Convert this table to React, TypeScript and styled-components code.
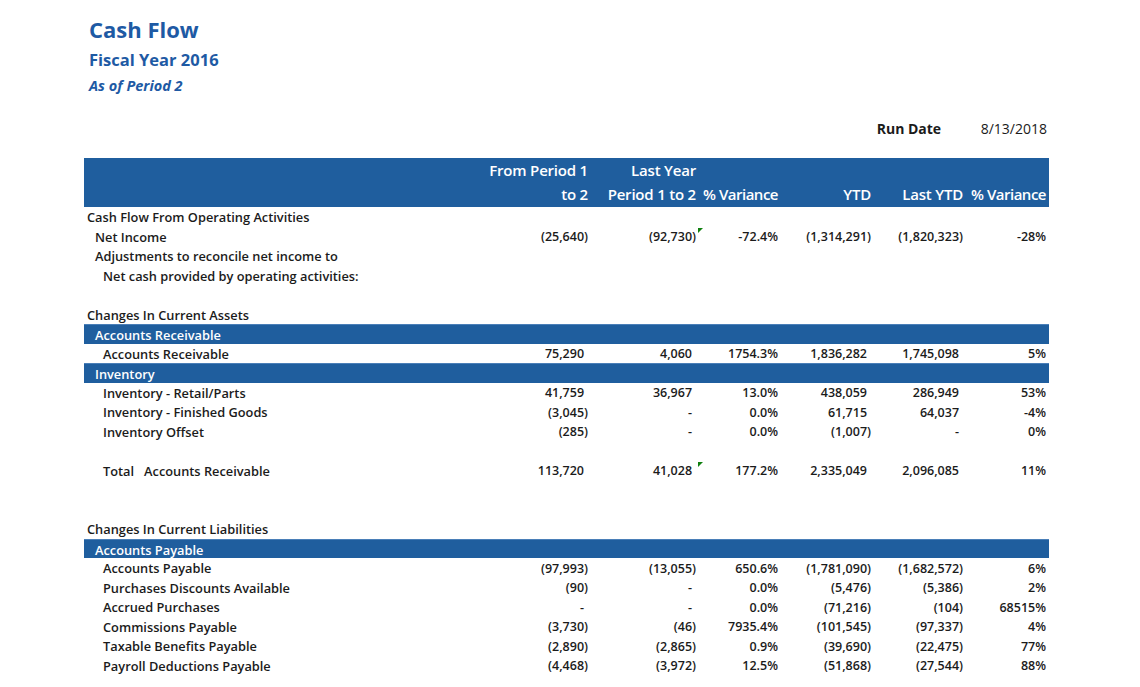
import React from "react";
import styled, { createGlobalStyle } from "styled-components";

const GlobalStyle = createGlobalStyle`
  html, body { margin: 0; padding: 0; background: #ffffff; }
  body { font-family: "Open Sans", "Noto Sans", "DejaVu Sans", sans-serif; color: #1b1b1b; }
  * { box-sizing: border-box; }
`;

const Page = styled.div`
  width: 1140px;
  padding: 12px 91px 0 84px;
`;

const TitleBlock = styled.header`
  padding-left: 5px;
  color: #1e5aa4;
`;

const Title = styled.h1`
  margin: 0;
  font-size: 22px;
  line-height: 34px;
  font-weight: 700;
`;

const Subtitle = styled.h2`
  margin: 0;
  font-size: 16.5px;
  line-height: 28px;
  font-weight: 700;
`;

const Period = styled.div`
  font-size: 14.5px;
  line-height: 24px;
  font-weight: 700;
  font-style: italic;
`;

const RunDateRow = styled.div`
  margin-top: 20px;
  display: flex;
  justify-content: flex-end;
  padding-right: 2px;
  height: 20px;
  align-items: center;
  font-size: 14px;
`;

const RunLabel = styled.span`
  font-weight: 700;
  width: 104px;
`;

const RunValue = styled.span`
  font-weight: 400;
`;

const Table = styled.div`
  margin-top: 20px;
  width: 965px;
  font-size: 12.5px;
  font-weight: 600;
`;

const cols = "1fr 100px 108px 82px 93px 92px 83px";

const HeaderBand = styled.div`
  display: grid;
  grid-template-columns: ${cols};
  background: #1f5e9e;
  color: #ffffff;
  height: 49px;
  font-size: 15px;
  font-weight: 600;
  line-height: 24px;
`;

const HeadCell = styled.div<{ $tight?: boolean }>`
  display: flex;
  flex-direction: column;
  align-items: flex-end;
  justify-content: flex-end;
  padding: 0 3px 1px 0;
  white-space: nowrap;
  letter-spacing: ${(p) => (p.$tight ? "-0.5px" : "-0.2px")};
`;

const Row = styled.div<{ $band?: boolean }>`
  display: grid;
  grid-template-columns: ${cols};
  height: 19.5px;
  align-items: center;
  padding-top: 1px;
  background: ${(p) => (p.$band ? "#1f5e9e" : "transparent")};
  color: ${(p) => (p.$band ? "#ffffff" : "#1b1b1b")};
  border-top: ${(p) => (p.$band ? "1px solid #4a7fb8" : "0")};
`;

const Label = styled.div<{ $indent: number }>`
  padding-left: ${(p) => 3 + p.$indent * 8}px;
  white-space: pre;
  font-size: 12.8px;
`;

const Cell = styled.div`
  position: relative;
  display: flex;
  justify-content: flex-end;
  padding-right: 3px;
  white-space: nowrap;
  height: 100%;
  align-items: center;
`;

const Ghost = styled.span`
  visibility: hidden;
`;

const Flag = styled.span`
  position: absolute;
  top: 0;
  right: -4px;
  width: 0;
  height: 0;
  border-top: 5px solid #108010;
  border-right: 5px solid transparent;
`;

type V = string;
type RowDef =
  | { kind: "blank" }
  | { kind: "band"; label: string }
  | { kind: "line"; label: string; indent: number; values?: V[]; flag?: boolean };

const rows: RowDef[] = [
  { kind: "line", label: "Cash Flow From Operating Activities", indent: 0 },
  { kind: "line", label: "Net Income", indent: 1, values: ["(25,640)", "(92,730)", "-72.4%", "(1,314,291)", "(1,820,323)", "-28%"], flag: true },
  { kind: "line", label: "Adjustments to reconcile net income to", indent: 1 },
  { kind: "line", label: "Net cash provided by operating activities:", indent: 2 },
  { kind: "blank" },
  { kind: "line", label: "Changes In Current Assets", indent: 0 },
  { kind: "band", label: "Accounts Receivable" },
  { kind: "line", label: "Accounts Receivable", indent: 2, values: ["75,290", "4,060", "1754.3%", "1,836,282", "1,745,098", "5%"] },
  { kind: "band", label: "Inventory" },
  { kind: "line", label: "Inventory - Retail/Parts", indent: 2, values: ["41,759", "36,967", "13.0%", "438,059", "286,949", "53%"] },
  { kind: "line", label: "Inventory - Finished Goods", indent: 2, values: ["(3,045)", "-", "0.0%", "61,715", "64,037", "-4%"] },
  { kind: "line", label: "Inventory Offset", indent: 2, values: ["(285)", "-", "0.0%", "(1,007)", "-", "0%"] },
  { kind: "blank" },
  { kind: "line", label: "Total   Accounts Receivable", indent: 2, values: ["113,720", "41,028", "177.2%", "2,335,049", "2,096,085", "11%"], flag: true },
  { kind: "blank" },
  { kind: "blank" },
  { kind: "line", label: "Changes In Current Liabilities", indent: 0 },
  { kind: "band", label: "Accounts Payable" },
  { kind: "line", label: "Accounts Payable", indent: 2, values: ["(97,993)", "(13,055)", "650.6%", "(1,781,090)", "(1,682,572)", "6%"] },
  { kind: "line", label: "Purchases Discounts Available", indent: 2, values: ["(90)", "-", "0.0%", "(5,476)", "(5,386)", "2%"] },
  { kind: "line", label: "Accrued Purchases", indent: 2, values: ["-", "-", "0.0%", "(71,216)", "(104)", "68515%"] },
  { kind: "line", label: "Commissions Payable", indent: 2, values: ["(3,730)", "(46)", "7935.4%", "(101,545)", "(97,337)", "4%"] },
  { kind: "line", label: "Taxable Benefits Payable", indent: 2, values: ["(2,890)", "(2,865)", "0.9%", "(39,690)", "(22,475)", "77%"] },
  { kind: "line", label: "Payroll Deductions Payable", indent: 2, values: ["(4,468)", "(3,972)", "12.5%", "(51,868)", "(27,544)", "88%"] },
];

const isPercentCol = (i: number) => i === 2 || i === 5;

function Value({ v, col, flag }: { v: string; col: number; flag?: boolean }) {
  const accounting = !isPercentCol(col);
  const needsGhost = accounting && !v.endsWith(")");
  return (
    <Cell>
      {v}
      {needsGhost && <Ghost>)</Ghost>}
      {flag && col === 1 && <Flag />}
    </Cell>
  );
}

export default function App() {
  return (
    <>
      <GlobalStyle />
      <Page>
        <TitleBlock>
          <Title>Cash Flow</Title>
          <Subtitle>Fiscal Year 2016</Subtitle>
          <Period>As of Period 2</Period>
        </TitleBlock>
        <RunDateRow>
          <RunLabel>Run Date</RunLabel>
          <RunValue>8/13/2018</RunValue>
        </RunDateRow>
        <Table>
          <HeaderBand>
            <HeadCell />
            <HeadCell>
              <span>From Period 1</span>
              <span>to 2</span>
            </HeadCell>
            <HeadCell>
              <span>Last Year</span>
              <span>Period 1 to 2</span>
            </HeadCell>
            <HeadCell $tight>
              <span>% Variance</span>
            </HeadCell>
            <HeadCell>
              <span>YTD</span>
            </HeadCell>
            <HeadCell>
              <span>Last YTD</span>
            </HeadCell>
            <HeadCell $tight>
              <span>% Variance</span>
            </HeadCell>
          </HeaderBand>
          {rows.map((r, idx) => {
            if (r.kind === "blank") return <Row key={idx} />;
            if (r.kind === "band")
              return (
                <Row key={idx} $band>
                  <Label $indent={1}>{r.label}</Label>
                </Row>
              );
            return (
              <Row key={idx}>
                <Label $indent={r.indent}>{r.label}</Label>
                {r.values &&
                  r.values.map((v, i) => <Value key={i} v={v} col={i} flag={r.flag} />)}
              </Row>
            );
          })}
        </Table>
      </Page>
    </>
  );
}
